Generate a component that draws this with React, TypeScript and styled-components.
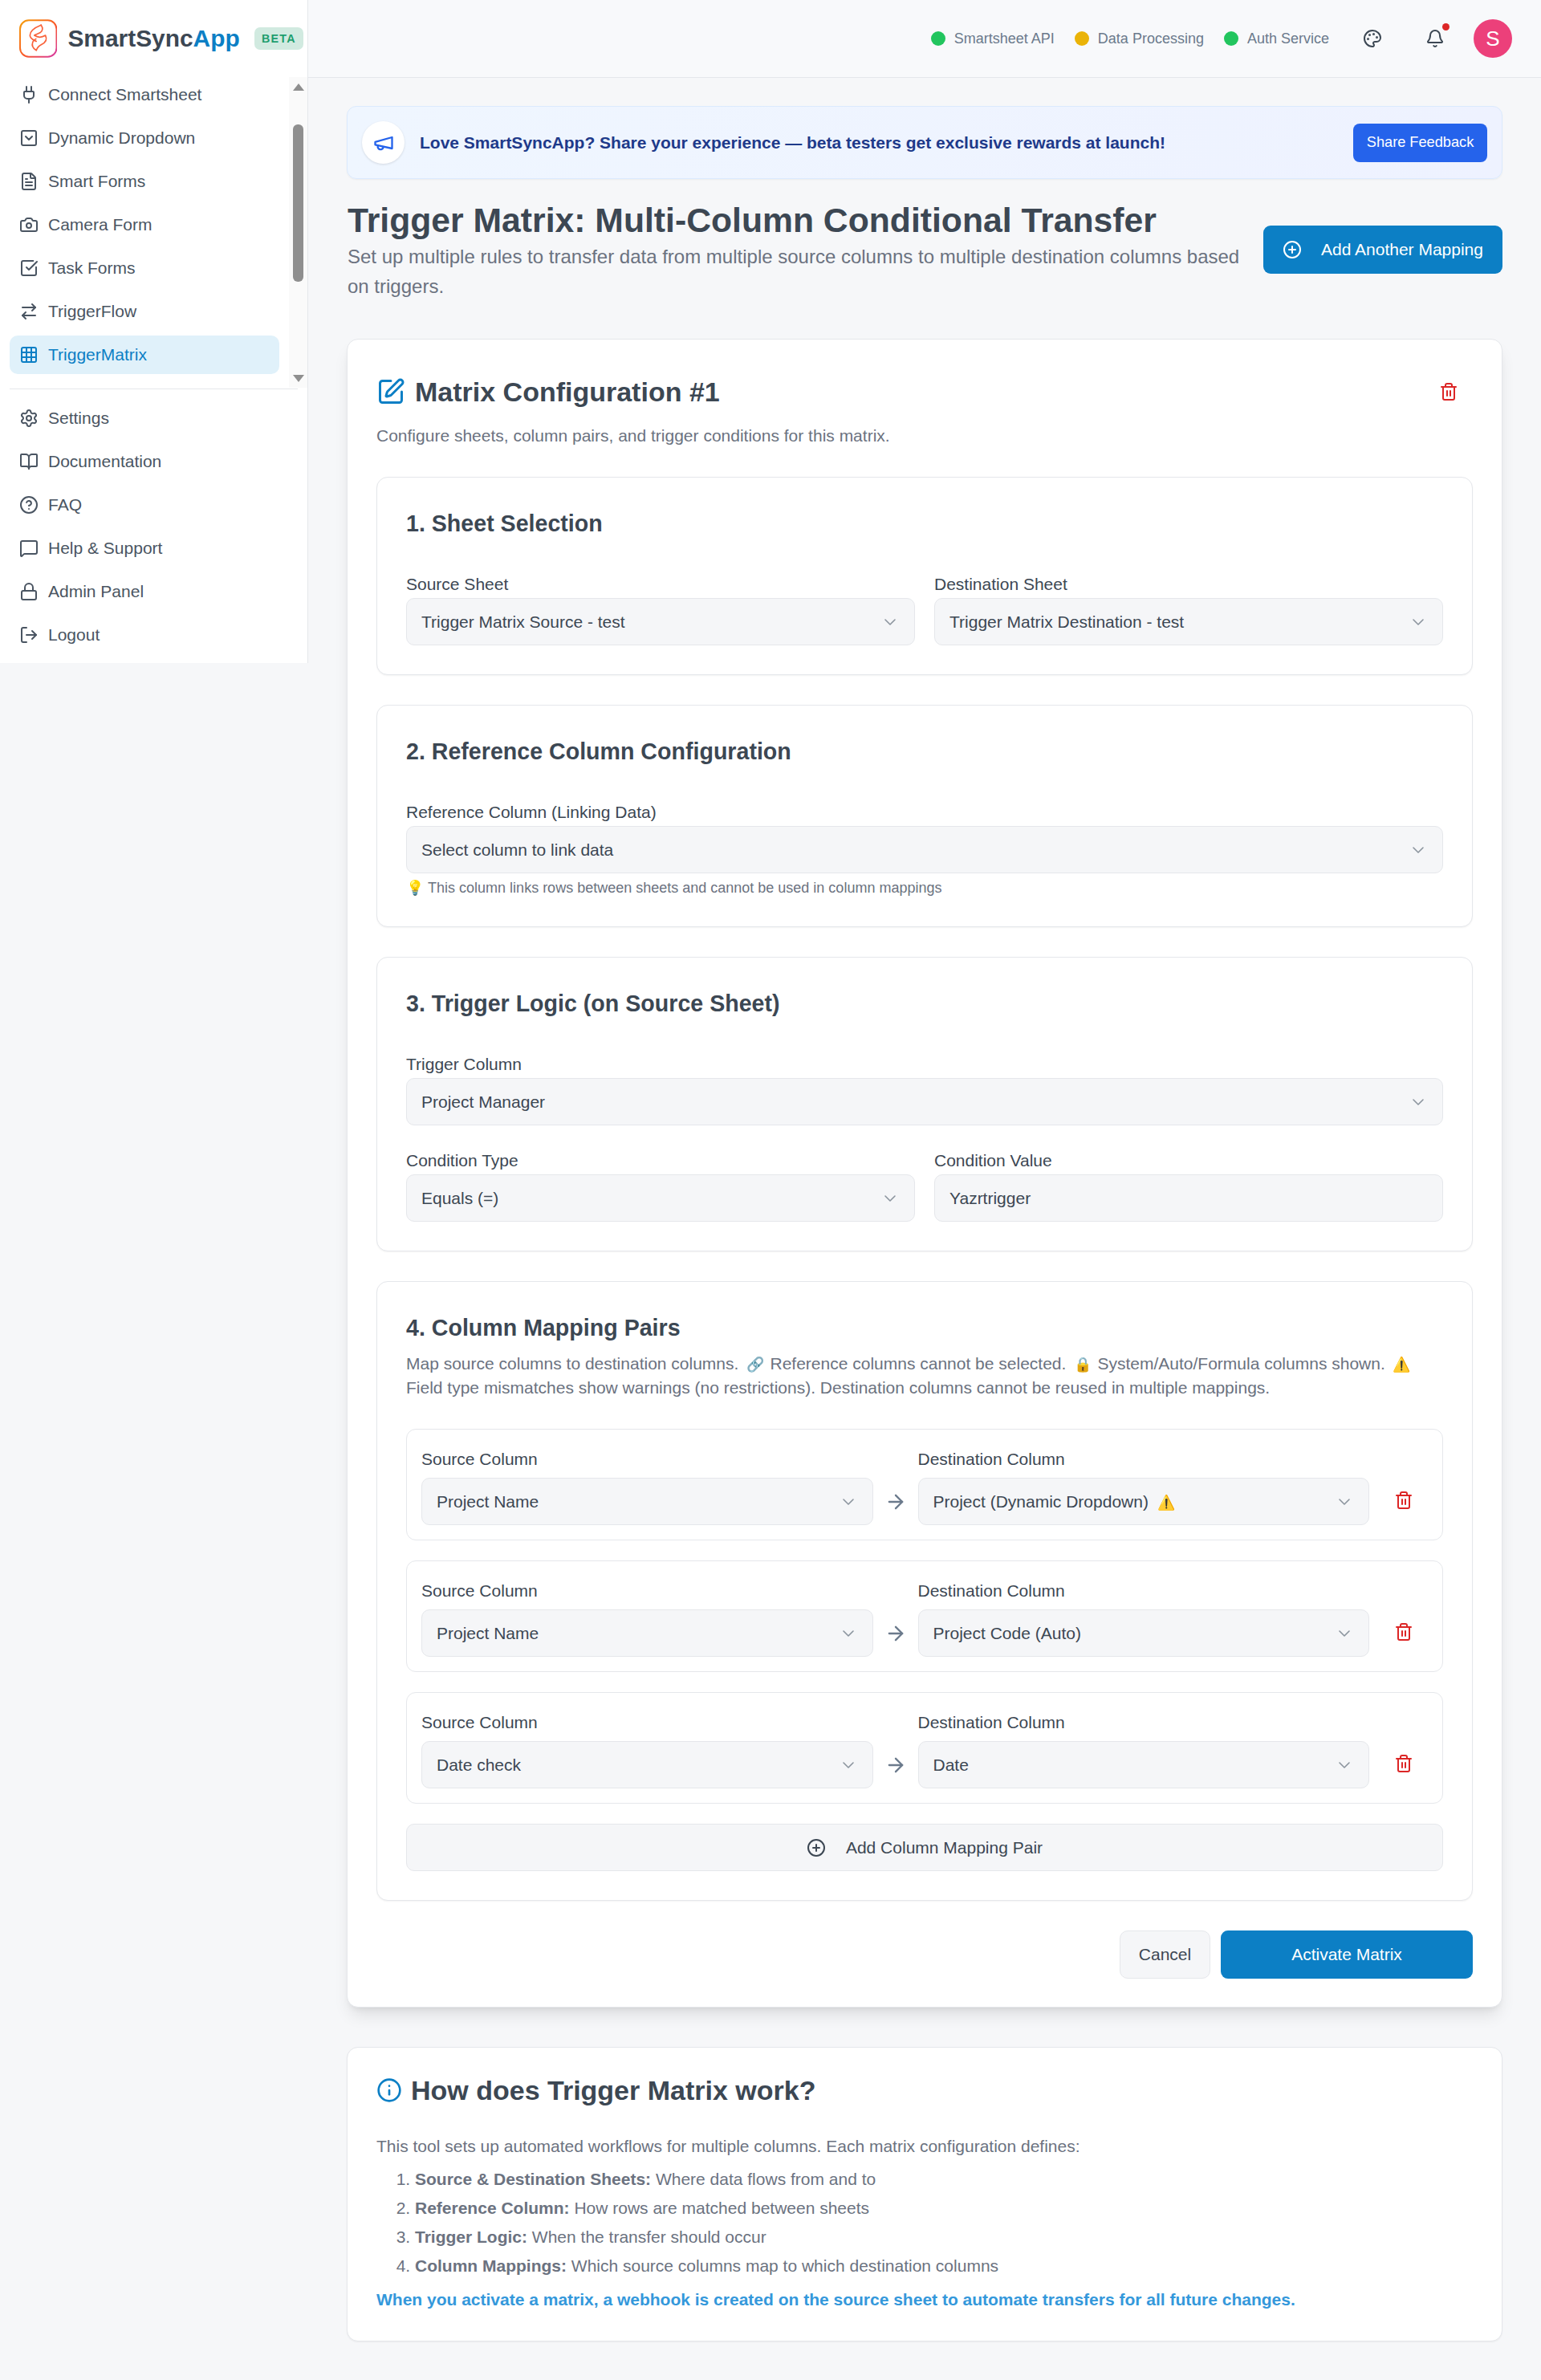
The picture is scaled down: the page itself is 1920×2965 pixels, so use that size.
import React from "react";
import styled, { createGlobalStyle } from "styled-components";
import {
	ArrowRight,
	ArrowRightLeft,
	Bell,
	BookOpen,
	Camera,
	ChevronDown,
	CircleHelp,
	CirclePlus,
	FileText,
	Grid3x3,
	Info,
	Lock,
	LogOut,
	MessageSquare,
	Palette,
	Plug,
	Settings,
	SquareCheckBig,
	SquareChevronDown,
	SquarePen,
	Trash2,
} from "lucide-react";

const GlobalStyle = createGlobalStyle`
	html, body {
		margin: 0;
		padding: 0;
		background: #f6f7f9;
	}
	body {
		font-family: "Liberation Sans", Arial, "Noto Color Emoji", sans-serif;
		color: #3c4753;
	}
	* {
		box-sizing: border-box;
	}
`;

const topNav = [
	{ label: "Connect Smartsheet", Icon: Plug },
	{ label: "Dynamic Dropdown", Icon: SquareChevronDown },
	{ label: "Smart Forms", Icon: FileText },
	{ label: "Camera Form", Icon: Camera },
	{ label: "Task Forms", Icon: SquareCheckBig },
	{ label: "TriggerFlow", Icon: ArrowRightLeft },
	{ label: "TriggerMatrix", Icon: Grid3x3, active: true },
];

const bottomNav = [
	{ label: "Settings", Icon: Settings },
	{ label: "Documentation", Icon: BookOpen },
	{ label: "FAQ", Icon: CircleHelp },
	{ label: "Help & Support", Icon: MessageSquare },
	{ label: "Admin Panel", Icon: Lock },
	{ label: "Logout", Icon: LogOut },
];

const pairs = [
	{ source: "Project Name", dest: "Project (Dynamic Dropdown)", warn: true },
	{ source: "Project Name", dest: "Project Code (Auto)" },
	{ source: "Date check", dest: "Date" },
];

function Logo() {
	return (
		<svg width="48" height="48" viewBox="0 0 48 48" fill="none">
			<defs>
				<linearGradient id="logoGrad" x1="0" y1="0" x2="1" y2="1">
					<stop offset="0" stopColor="#f59e0b" />
					<stop offset="0.55" stopColor="#f9582a" />
					<stop offset="1" stopColor="#d63aa8" />
				</linearGradient>
			</defs>
			<rect x="1" y="1" width="46" height="46" rx="11" stroke="url(#logoGrad)" strokeWidth="2" />
			<path
				d="M27.5 7C20 10 13.5 14 13.5 20C13.5 24.5 18 26 21.5 27.5"
				stroke="#f9623a"
				strokeWidth="1.7"
				strokeLinecap="round"
			/>
			<path
				d="M27.5 7C30 10.5 30 14 26.5 16.5C24 18 21 18.5 19 20C23.5 23 29 22.5 33 20C35.5 25 33 29 28 31.5C25 33 22.5 35.5 21.5 39C17.5 36.5 15.5 32.5 17 28.5C17.8 26.7 19.3 25.2 21 24.5"
				stroke="#f9623a"
				strokeWidth="1.7"
				strokeLinejoin="round"
				strokeLinecap="round"
			/>
		</svg>
	);
}

function MegaphoneIcon() {
	return (
		<svg width="28" height="28" viewBox="0 0 24 24" fill="none" stroke="currentColor" strokeWidth="2" strokeLinecap="round" strokeLinejoin="round">
			<path d="m3 11 18-5v12L3 14v-3z" />
			<path d="M11.6 16.8a3 3 0 1 1-5.8-1.6" />
		</svg>
	);
}

function SelectBox({ children }: { children: React.ReactNode }) {
	return (
		<Select>
			<span>{children}</span>
			<ChevronDown size={24} strokeWidth={1.6} />
		</Select>
	);
}

function NavRow({ label, Icon, active }: { label: string; Icon: typeof Plug; active?: boolean }) {
	return (
		<NavItem $active={active}>
			<Icon size={24} strokeWidth={2} />
			<span>{label}</span>
		</NavItem>
	);
}

export default function App() {
	return (
		<>
			<GlobalStyle />
			<Page>
				<Sidebar>
					<Brand>
						<Logo />
						<BrandName>
							SmartSync<em>App</em>
						</BrandName>
						<BetaBadge>BETA</BetaBadge>
					</Brand>
					<ScrollArea>
						<ScrolledNav>
							{topNav.map((item) => (
								<NavRow key={item.label} {...item} />
							))}
						</ScrolledNav>
						<ScrollTrack>
							<ArrowUp />
							<ThumbSlot>
								<Thumb />
							</ThumbSlot>
							<ArrowDown />
						</ScrollTrack>
					</ScrollArea>
					<NavDivider />
					<NavList>
						{bottomNav.map((item) => (
							<NavRow key={item.label} {...item} />
						))}
					</NavList>
				</Sidebar>

				<Main>
					<Header>
						<StatusGroup>
							<Status>
								<Dot $color="#22c55e" />
								Smartsheet API
							</Status>
							<Status>
								<Dot $color="#eab308" />
								Data Processing
							</Status>
							<Status>
								<Dot $color="#22c55e" />
								Auth Service
							</Status>
						</StatusGroup>
						<HeaderIcon>
							<Palette size={24} strokeWidth={2} />
						</HeaderIcon>
						<HeaderIcon>
							<Bell size={24} strokeWidth={2} />
							<NotifyDot />
						</HeaderIcon>
						<Avatar>S</Avatar>
					</Header>

					<Content>
						<Banner>
							<BannerIcon>
								<MegaphoneIcon />
							</BannerIcon>
							<BannerText>Love SmartSyncApp? Share your experience — beta testers get exclusive rewards at launch!</BannerText>
							<BannerButton>Share Feedback</BannerButton>
						</Banner>

						<TitleRow>
							<div>
								<PageTitle>Trigger Matrix: Multi-Column Conditional Transfer</PageTitle>
								<PageDesc>
									Set up multiple rules to transfer data from multiple source columns to multiple destination columns based on triggers.
								</PageDesc>
							</div>
							<AddMapping>
								<CirclePlus size={24} strokeWidth={2} />
								Add Another Mapping
							</AddMapping>
						</TitleRow>

						<ConfigCard>
							<ConfigHead>
								<CardTitle>
									<SquarePen size={36} strokeWidth={2} color="#0c7fc5" />
									Matrix Configuration #1
								</CardTitle>
								<TrashButton>
									<Trash2 size={24} strokeWidth={2} />
								</TrashButton>
							</ConfigHead>
							<ConfigSub>Configure sheets, column pairs, and trigger conditions for this matrix.</ConfigSub>

							<Section>
								<SectionTitle>1. Sheet Selection</SectionTitle>
								<TwoCols>
									<div>
										<Label>Source Sheet</Label>
										<SelectBox>Trigger Matrix Source - test</SelectBox>
									</div>
									<div>
										<Label>Destination Sheet</Label>
										<SelectBox>Trigger Matrix Destination - test</SelectBox>
									</div>
								</TwoCols>
							</Section>

							<Section>
								<SectionTitle>2. Reference Column Configuration</SectionTitle>
								<Label>Reference Column (Linking Data)</Label>
								<SelectBox>Select column to link data</SelectBox>
								<Hint>💡 This column links rows between sheets and cannot be used in column mappings</Hint>
							</Section>

							<Section>
								<SectionTitle>3. Trigger Logic (on Source Sheet)</SectionTitle>
								<Label>Trigger Column</Label>
								<SelectBox>Project Manager</SelectBox>
								<TwoCols $top={29}>
									<div>
										<Label>Condition Type</Label>
										<SelectBox>Equals (=)</SelectBox>
									</div>
									<div>
										<Label>Condition Value</Label>
										<InputBox>Yazrtrigger</InputBox>
									</div>
								</TwoCols>
							</Section>

							<Section>
								<MappingTitle>4. Column Mapping Pairs</MappingTitle>
								<MappingDesc>
									Map source columns to destination columns. <Emoji>🔗</Emoji> Reference columns cannot be selected. <Emoji>🔒</Emoji> System/Auto/Formula columns shown. <Emoji>⚠️</Emoji> Field type mismatches show warnings (no restrictions). Destination columns cannot be reused in multiple mappings.
								</MappingDesc>
								{pairs.map((pair, i) => (
									<PairCard key={i}>
										<PairLabel>Source Column</PairLabel>
										<span />
										<PairLabel>Destination Column</PairLabel>
										<span />
										<SelectBox>{pair.source}</SelectBox>
										<PairArrow>
											<ArrowRight size={28} strokeWidth={2} />
										</PairArrow>
										<SelectBox>
											{pair.dest}
											{pair.warn && <WarnMark>⚠️</WarnMark>}
										</SelectBox>
										<PairTrash>
											<Trash2 size={24} strokeWidth={2} />
										</PairTrash>
									</PairCard>
								))}
								<AddPair>
									<CirclePlus size={24} strokeWidth={2} />
									Add Column Mapping Pair
								</AddPair>
							</Section>

							<Actions>
								<CancelButton>Cancel</CancelButton>
								<ActivateButton>Activate Matrix</ActivateButton>
							</Actions>
						</ConfigCard>

						<HowCard>
							<HowTitle>
								<Info size={32} strokeWidth={2} color="#0c7fc5" />
								How does Trigger Matrix work?
							</HowTitle>
							<HowIntro>This tool sets up automated workflows for multiple columns. Each matrix configuration defines:</HowIntro>
							<HowList>
								<li>
									<strong>Source &amp; Destination Sheets:</strong> Where data flows from and to
								</li>
								<li>
									<strong>Reference Column:</strong> How rows are matched between sheets
								</li>
								<li>
									<strong>Trigger Logic:</strong> When the transfer should occur
								</li>
								<li>
									<strong>Column Mappings:</strong> Which source columns map to which destination columns
								</li>
							</HowList>
							<HowNote>When you activate a matrix, a webhook is created on the source sheet to automate transfers for all future changes.</HowNote>
						</HowCard>
					</Content>
				</Main>
			</Page>
		</>
	);
}

const Page = styled.div`
	display: flex;
	align-items: flex-start;
	width: 1920px;
	min-height: 2965px;
	background: #f6f7f9;
`;

const Sidebar = styled.aside`
	width: 384px;
	height: 826px;
	flex-shrink: 0;
	background: #ffffff;
	border-right: 1px solid #e5e7eb;
`;

const Brand = styled.div`
	height: 96px;
	padding: 0 5px 0 24px;
	display: flex;
	align-items: center;
`;

const BrandName = styled.div`
	margin-left: 13px;
	font-size: 29.9px;
	font-weight: 700;
	color: #3c4753;

	em {
		font-style: normal;
		color: #0c7fc5;
	}
`;

const BetaBadge = styled.div`
	margin-left: 18px;
	width: 62px;
	height: 28px;
	border-radius: 7px;
	background: #d1eae0;
	color: #1e9e6e;
	font-size: 14.3px;
	font-weight: 700;
	letter-spacing: 1.2px;
	display: flex;
	align-items: center;
	justify-content: center;
`;

const ScrollArea = styled.div`
	display: flex;
	height: 387px;
`;

const NavList = styled.div`
	flex: 1;
	padding: 0 12px;
`;

const ScrolledNav = styled(NavList)`
	margin-top: -2px;
`;

const NavItem = styled.div<{ $active?: boolean }>`
	height: 48px;
	margin-bottom: 6px;
	padding-left: 12px;
	border-radius: 10px;
	display: flex;
	align-items: center;
	gap: 12px;
	font-size: 21px;
	color: ${(props) => (props.$active ? "#0c7fc5" : "#4a5562")};
	background: ${(props) => (props.$active ? "#e0f1fa" : "transparent")};

	svg {
		flex-shrink: 0;
	}
`;

const ScrollTrack = styled.div`
	width: 23px;
	background: #fafafa;
	display: flex;
	flex-direction: column;
	align-items: center;
`;

const ArrowUp = styled.div`
	margin-top: 8px;
	width: 0;
	height: 0;
	border-left: 7px solid transparent;
	border-right: 7px solid transparent;
	border-bottom: 9px solid #8f8f8f;
`;

const ArrowDown = styled.div`
	margin-bottom: 7px;
	width: 0;
	height: 0;
	border-left: 7px solid transparent;
	border-right: 7px solid transparent;
	border-top: 9px solid #8f8f8f;
`;

const ThumbSlot = styled.div`
	flex: 1;
	padding-top: 42px;
`;

const Thumb = styled.div`
	width: 13px;
	height: 196px;
	border-radius: 6px;
	background: #8f8f8f;
`;

const NavDivider = styled.div`
	height: 1px;
	margin: 1px 12px 12px;
	background: #e5e7eb;
`;

const Main = styled.main`
	flex: 1;
	min-width: 0;
`;

const Header = styled.header`
	height: 97px;
	padding: 0 36px 0 0;
	display: flex;
	align-items: center;
	justify-content: flex-end;
	background: #f8f9fb;
	border-bottom: 1px solid #e5e7eb;
`;

const StatusGroup = styled.div`
	display: flex;
	align-items: center;
	gap: 25px;
	margin-right: 15px;
`;

const Status = styled.div`
	display: flex;
	align-items: center;
	gap: 11px;
	font-size: 18px;
	color: #6b7a8c;
`;

const Dot = styled.span<{ $color: string }>`
	width: 18px;
	height: 18px;
	border-radius: 50%;
	background: ${(props) => props.$color};
`;

const HeaderIcon = styled.div`
	position: relative;
	width: 24px;
	height: 24px;
	margin: 0 27px;
	color: #3c4753;
`;

const NotifyDot = styled.span`
	position: absolute;
	top: -7px;
	right: -6px;
	width: 9px;
	height: 9px;
	border-radius: 50%;
	background: #dc2626;
`;

const Avatar = styled.div`
	margin-left: 9px;
	width: 48px;
	height: 48px;
	border-radius: 50%;
	background: #ec407a;
	color: #ffffff;
	font-size: 26px;
	display: flex;
	align-items: center;
	justify-content: center;
`;

const Content = styled.div`
	padding: 35px 48px 48px;
`;

const Banner = styled.div`
	height: 91px;
	padding: 0 18px;
	display: flex;
	align-items: center;
	border: 1px solid #dbeafe;
	border-radius: 12px;
	background: linear-gradient(90deg, #eff6ff, #eef2ff);
	box-shadow: 0 1px 2px rgba(0, 0, 0, 0.05);
`;

const BannerIcon = styled.div`
	width: 53px;
	height: 53px;
	flex-shrink: 0;
	border-radius: 50%;
	background: #ffffff;
	color: #2563eb;
	box-shadow: 0 1px 3px rgba(0, 0, 0, 0.12);
	display: flex;
	align-items: center;
	justify-content: center;
`;

const BannerText = styled.div`
	flex: 1;
	margin-left: 19px;
	font-size: 21px;
	font-weight: 700;
	color: #1e3a8a;
`;

const BannerButton = styled.div`
	width: 167px;
	height: 48px;
	border-radius: 8px;
	background: #2563eb;
	color: #ffffff;
	font-size: 18.2px;
	display: flex;
	align-items: center;
	justify-content: center;
`;

const TitleRow = styled.div`
	margin: 24px 0 47px;
	padding-left: 1px;
	display: flex;
	align-items: center;
	justify-content: space-between;
	gap: 24px;
`;

const PageTitle = styled.h1`
	margin: 0;
	font-size: 42.7px;
	line-height: 54px;
	font-weight: 700;
	color: #3c4753;
`;

const PageDesc = styled.p`
	margin: 0;
	font-size: 24px;
	line-height: 37px;
	color: #6b7280;
`;

const AddMapping = styled.div`
	width: 298px;
	height: 60px;
	flex-shrink: 0;
	padding-left: 24px;
	border-radius: 9px;
	background: #0c7fc5;
	color: #ffffff;
	font-size: 21px;
	display: flex;
	align-items: center;
	gap: 24px;
`;

const ConfigCard = styled.section`
	padding: 36px 36px 35px;
	background: #ffffff;
	border: 1px solid #e5e7eb;
	border-radius: 14px;
	box-shadow: 0 13px 20px -4px rgba(0, 0, 0, 0.1), 0 5px 8px -5px rgba(0, 0, 0, 0.1);
`;

const ConfigHead = styled.div`
	height: 58px;
	display: flex;
	align-items: center;
	justify-content: space-between;
`;

const CardTitle = styled.h2`
	margin: 0;
	font-size: 34px;
	font-weight: 700;
	color: #3c4753;
	display: flex;
	align-items: center;
	gap: 12px;
`;

const TrashButton = styled.div`
	margin-right: 18px;
	color: #dc2626;
	display: flex;
`;

const ConfigSub = styled.p`
	margin: 12px 0 37px;
	font-size: 21px;
	line-height: 28px;
	color: #6b7280;
`;

const Section = styled.div`
	margin-bottom: 37px;
	padding: 36px;
	border: 1px solid #e5e7eb;
	border-radius: 14px;
	background: #ffffff;
	box-shadow: 0 1px 2px rgba(0, 0, 0, 0.05);
`;

const SectionTitle = styled.h3`
	margin: 0 0 40px;
	font-size: 28.6px;
	line-height: 42px;
	font-weight: 700;
	color: #3c4753;
`;

const MappingTitle = styled(SectionTitle)`
	margin-bottom: 9px;
`;

const MappingDesc = styled.p`
	margin: 0 0 36px;
	font-size: 21px;
	line-height: 30px;
	color: #6b7280;
`;

const Emoji = styled.span`
	margin: 0 1px 0 4px;
	font-size: 18px;
	line-height: 1;
`;

const TwoCols = styled.div<{ $top?: number }>`
	display: grid;
	grid-template-columns: 1fr 1fr;
	gap: 24px;
	margin-top: ${(props) => props.$top ?? 0}px;
`;

const Label = styled.div`
	margin-bottom: 2px;
	font-size: 21px;
	line-height: 30px;
	color: #3c4753;
`;

const Select = styled.div`
	height: 59px;
	padding: 0 18px;
	border: 1px solid #e5e7eb;
	border-radius: 10px;
	background: #f5f6f8;
	color: #3c4753;
	font-size: 21px;
	display: flex;
	align-items: center;
	justify-content: space-between;

	svg {
		flex-shrink: 0;
		color: #8b949e;
	}
`;

const InputBox = styled(Select)``;

const Hint = styled.div`
	margin-top: 6px;
	font-size: 18px;
	line-height: 24px;
	color: #6b7280;
`;

const PairCard = styled.div`
	margin-bottom: 25px;
	padding: 22px 18px 18px;
	border: 1px solid #e5e7eb;
	border-radius: 12px;
	background: #ffffff;
	display: grid;
	grid-template-columns: 1fr 56px 1fr 73px;
	align-items: center;
`;

const PairLabel = styled.div`
	margin-bottom: 8px;
	font-size: 21px;
	line-height: 30px;
	color: #3c4753;
`;

const PairArrow = styled.div`
	color: #6b7a8c;
	display: flex;
	justify-content: center;
`;

const PairTrash = styled.div`
	padding-left: 13px;
	margin-bottom: 4px;
	color: #dc2626;
	display: flex;
	justify-content: center;
`;

const WarnMark = styled.span`
	margin-left: 11px;
	font-size: 18px;
	line-height: 1;
`;

const AddPair = styled.div`
	height: 59px;
	border: 1px solid #e5e7eb;
	border-radius: 10px;
	background: #f5f6f8;
	color: #3c4753;
	font-size: 21px;
	display: flex;
	align-items: center;
	justify-content: center;
	gap: 25px;
`;

const Actions = styled.div`
	height: 60px;
	display: flex;
	justify-content: flex-end;
	gap: 13px;
`;

const CancelButton = styled.div`
	width: 113px;
	border: 1px solid #e5e7eb;
	border-radius: 10px;
	background: #f5f6f8;
	font-size: 21px;
	display: flex;
	align-items: center;
	justify-content: center;
`;

const ActivateButton = styled.div`
	width: 314px;
	border-radius: 9px;
	background: #0c7fc5;
	color: #ffffff;
	font-size: 21px;
	display: flex;
	align-items: center;
	justify-content: center;
`;

const HowCard = styled.section`
	margin-top: 49px;
	padding: 36px 36px 36px;
	background: #ffffff;
	border: 1px solid #e5e7eb;
	border-radius: 14px;
	box-shadow: 0 1px 2px rgba(0, 0, 0, 0.05);
`;

const HowTitle = styled.h2`
	margin: 0 0 38px;
	font-size: 34px;
	line-height: 34px;
	font-weight: 700;
	color: #3c4753;
	display: flex;
	align-items: center;
	gap: 11px;
`;

const HowIntro = styled.p`
	margin: 0 0 8px;
	font-size: 21px;
	line-height: 30px;
	color: #6b7280;
`;

const HowList = styled.ol`
	margin: 0 0 9px;
	padding-left: 48px;
	font-size: 21px;
	line-height: 36px;
	color: #6b7280;
`;

const HowNote = styled.p`
	margin: 0;
	font-size: 21px;
	font-weight: 700;
	line-height: 30px;
	color: #3498db;
`;
